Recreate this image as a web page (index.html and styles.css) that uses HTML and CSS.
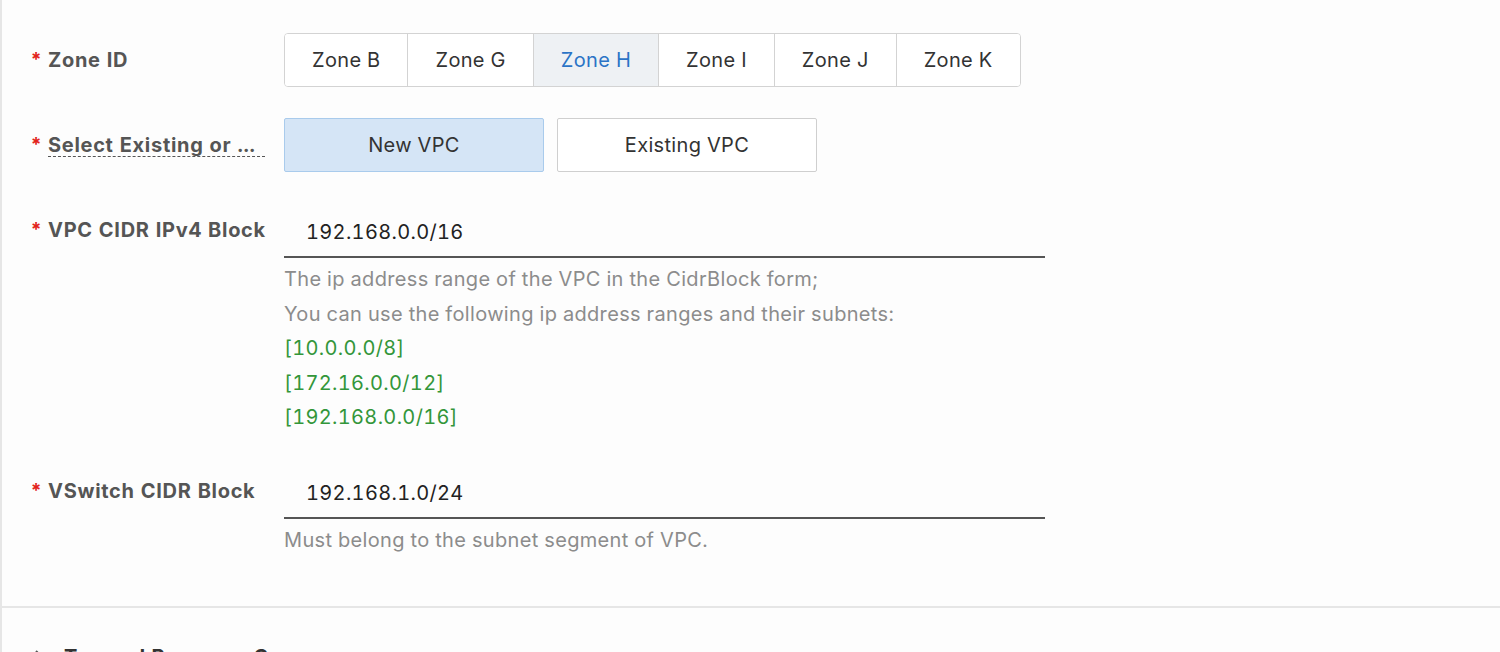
FILE: index.html
```html
<!DOCTYPE html>
<html lang="en">
<head>
<meta charset="utf-8">
<title>VPC settings</title>
<link rel="stylesheet" href="styles.css">
</head>
<body>
<div class="page">
  <div class="form">
    <div class="row row-btn">
      <div class="label"><span class="req">*</span><span class="label-text">Zone ID</span></div>
      <div class="control">
        <div class="seg">
          <button class="seg-item">Zone B</button>
          <button class="seg-item">Zone G</button>
          <button class="seg-item is-active">Zone H</button>
          <button class="seg-item">Zone I</button>
          <button class="seg-item">Zone J</button>
          <button class="seg-item">Zone K</button>
        </div>
      </div>
    </div>

    <div class="row row-btn row-vpc">
      <div class="label"><span class="req">*</span><span class="label-text label-tip" title="Select Existing or New VPC">Select Existing or ...</span></div>
      <div class="control choice">
        <button class="choice-item is-selected">New VPC</button>
        <button class="choice-item">Existing VPC</button>
      </div>
    </div>

    <div class="row row-input row-cidr">
      <div class="label"><span class="req">*</span><span class="label-text">VPC CIDR IPv4 Block</span></div>
      <div class="control">
        <div class="input">192.168.0.0/16</div>
        <div class="help">
          <div>The ip address range of the VPC in the CidrBlock form;</div>
          <div>You can use the following ip address ranges and their subnets:</div>
          <div class="ok">[10.0.0.0/8]</div>
          <div class="ok">[172.16.0.0/12]</div>
          <div class="ok">[192.168.0.0/16]</div>
        </div>
      </div>
    </div>

    <div class="row row-input">
      <div class="label"><span class="req">*</span><span class="label-text">VSwitch CIDR Block</span></div>
      <div class="control">
        <div class="input">192.168.1.0/24</div>
        <div class="help">
          <div>Must belong to the subnet segment of VPC.</div>
        </div>
      </div>
    </div>
  </div>

  <div class="divider"></div>

  <div class="section-head">
    <svg class="caret" width="10" height="14" viewBox="0 0 10 14"><path d="M2 1l6 6-6 6" fill="none" stroke="#555" stroke-width="2"/></svg>
    <span class="section-title">Tag and Resource Group</span>
  </div>
</div>
</body>
</html>
```

FILE: styles.css
```css
html, body {
  margin: 0;
  padding: 0;
  height: 100%;
  overflow: hidden;
  background: #fdfdfd;
}

body {
  font-family: Inter, "Liberation Sans", Arial, sans-serif;
  font-size: 20px;
  color: #333;
  letter-spacing: 0.33px;
  font-variant-numeric: tabular-nums;
}

.page {
  border-left: 2px solid #e6e6e6;
  min-height: 100%;
  box-sizing: border-box;
}

.form {
  padding: 33px 0 49px 28px;
}

.row {
  display: flex;
  align-items: flex-start;
}

.row-btn {
  height: 54px;
  margin-bottom: 31px;
}

.row-vpc {
  margin-bottom: 36px;
}

.row-cidr {
  margin-bottom: 34px;
}

.label {
  width: 254px;
  flex: none;
  display: flex;
  align-items: center;
  line-height: 24px;
  font-weight: 700;
  color: #555;
  white-space: nowrap;
  letter-spacing: 0.7px;
}

.row-btn .label {
  height: 54px;
}

.row-input .label {
  padding-top: 10px;
}

.req {
  color: #e2231a;
  width: 18px;
  font-size: 19px;
  flex: none;
  align-self: flex-start;
  line-height: 24px;
  letter-spacing: 0;
}

.row-btn .req {
  align-self: center;
}

.label-text {
  display: inline-block;
}

.label-tip {
  width: 217px;
  border-bottom: 1px dashed #555;
  line-height: 22px;
  overflow: hidden;
}

.control {
  flex: none;
}

.seg {
  display: flex;
  border: 1px solid #d3d3d3;
  border-radius: 4px;
  overflow: hidden;
  height: 54px;
  box-sizing: border-box;
  background: #fff;
}

.seg-item {
  font: inherit;
  letter-spacing: inherit;
  color: #333;
  background: #fff;
  border: 0;
  border-left: 1px solid #d3d3d3;
  padding: 0 27px;
  margin: 0;
  height: 52px;
}

.seg-item:first-child {
  border-left: 0;
}

.seg-item.is-active {
  background: #eef1f4;
  color: #2b74c6;
}

.choice {
  display: flex;
  gap: 13px;
}

.choice-item {
  font: inherit;
  letter-spacing: inherit;
  color: #333;
  width: 260px;
  height: 54px;
  background: #fff;
  border: 1px solid #cfcfcf;
  border-radius: 2px;
  margin: 0;
  padding: 0;
}

.choice-item.is-selected {
  background: #d5e5f6;
  border-color: #a9cbec;
}

.input {
  width: 761px;
  border-bottom: 2px solid #555;
  padding-left: 22px;
  box-sizing: border-box;
  height: 50px;
  line-height: 48px;
  color: #222;
}

.help {
  margin-top: 4px;
  line-height: 34.5px;
  color: #8c8c8c;
}

.help .ok {
  color: #33963a;
}

.divider {
  height: 2px;
  background: #e6e6e6;
}

.section-head {
  display: flex;
  align-items: center;
  padding: 37px 0 0 32px;
  line-height: 24px;
  font-weight: 700;
  color: #333;
  letter-spacing: 0.5px;
}

.caret {
  margin-right: 20px;
}
```
